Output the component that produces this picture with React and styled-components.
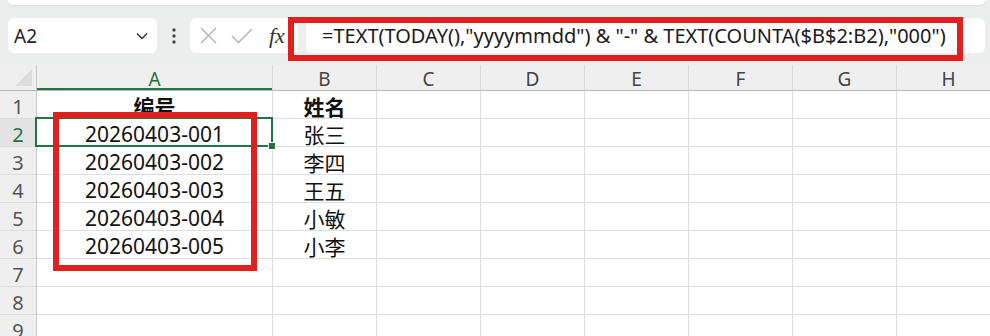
import React from 'react';
import styled, { createGlobalStyle } from 'styled-components';

const GlobalStyle = createGlobalStyle`
  html, body {
    margin: 0;
    padding: 0;
    background: #fff;
    overflow: hidden;
  }
  body {
    font-family: "Noto Sans", "Noto Sans CJK SC", sans-serif;
  }
`;

const GREEN = '#217346';
const RED = '#e0201f';

const Page = styled.div`
  width: 990px;
  height: 336px;
  overflow: hidden;
  background: #fff;
`;

const TopBar = styled.div`
  height: 65px;
  box-sizing: border-box;
  padding: 0 5px 0 8px;
  background: #eceeed;
  display: flex;
  flex-direction: column;
`;

const RibbonEdge = styled.div`
  height: 5px;
  background: #fff;
  border-radius: 0 0 7px 7px;
  box-shadow: 0 1px 2px rgba(0, 0, 0, 0.08);
`;

const FormulaRow = styled.div`
  position: relative;
  display: flex;
  align-items: center;
  height: 35px;
  margin-top: 13px;
`;

const NameBox = styled.div`
  width: 149px;
  height: 100%;
  box-sizing: border-box;
  padding: 0 9px 0 6px;
  background: #fff;
  border-radius: 6px;
  display: flex;
  align-items: center;
  justify-content: space-between;
  font-size: 19px;
  color: #222;
`;

const Dots = styled.div`
  width: 33px;
  display: flex;
  justify-content: center;
`;

const FxBox = styled.div`
  width: 108px;
  height: 100%;
  box-sizing: border-box;
  padding: 0 10px 0 10px;
  background: #fff;
  border-radius: 6px;
  display: flex;
  align-items: center;
  gap: 14px;
`;

const FxLabel = styled.span`
  font-family: "Liberation Serif", serif;
  font-style: italic;
  font-size: 22px;
  color: #333;
  margin-left: 2px;
`;

const FormulaInput = styled.div`
  flex: 1;
  height: 100%;
  margin-left: 8px;
  box-sizing: border-box;
  padding-left: 16px;
  background: #fff;
  border-radius: 6px;
  display: flex;
  align-items: center;
  font-size: 20px;
  color: #1a1a1a;
  white-space: nowrap;
`;

const Highlight = styled.div`
  position: absolute;
  box-sizing: border-box;
  border: 6px solid ${RED};
  left: ${p => p.$left}px;
  top: ${p => p.$top}px;
  width: ${p => p.$width}px;
  height: ${p => p.$height}px;
  pointer-events: none;
  z-index: 5;
`;

const Sheet = styled.div`
  position: relative;
  display: grid;
  grid-template-columns: 37px 236px repeat(7, 104px);
  grid-template-rows: 26px repeat(9, 28px);
`;

const Corner = styled.div`
  position: relative;
  background: #efefef;
  border-right: 1px solid #c8c8c8;
  border-bottom: 1px solid #b5b5b5;
  &::after {
    content: '';
    position: absolute;
    right: 4px;
    bottom: 4px;
    width: 17px;
    height: 17px;
    background: #dcdcdc;
    clip-path: polygon(100% 0, 100% 100%, 0 100%);
  }
`;

const ColHead = styled.div`
  padding-top: 3px;
  background: #efefef;
  border-right: 1px solid #d9d9d9;
  border-bottom: 1px solid #b5b5b5;
  box-shadow: ${p => (p.$active ? `inset 0 -2px 0 ${GREEN}` : 'none')};
  display: flex;
  align-items: center;
  justify-content: center;
  font-size: 19px;
  color: ${p => (p.$active ? GREEN : '#444')};
`;

const RowHead = styled.div`
  padding-top: 3px;
  background: ${p => (p.$active ? '#e3e3e3' : '#efefef')};
  border-right: 1px solid #c8c8c8;
  border-bottom: 1px solid #dcdcdc;
  display: flex;
  align-items: center;
  justify-content: center;
  font-size: 20px;
  color: ${p => (p.$active ? GREEN : '#555')};
`;

const Cell = styled.div`
  position: relative;
  padding-top: 3px;
  border-right: 1px solid #dedede;
  border-bottom: 1px solid #dedede;
  display: flex;
  align-items: center;
  justify-content: center;
  font-size: 21px;
  font-weight: ${p => (p.$bold ? 700 : 400)};
  color: #111;
  white-space: nowrap;
  ${p => p.$selected && `
    &::after {
      content: '';
      position: absolute;
      left: -2px;
      top: -2px;
      right: -1px;
      bottom: -1px;
      border: 2px solid ${GREEN};
      z-index: 2;
    }
    &::before {
      content: '';
      position: absolute;
      right: -4px;
      bottom: -4px;
      width: 6px;
      height: 6px;
      background: ${GREEN};
      border: 1px solid #fff;
      z-index: 3;
    }
  `}
`;

const columns = ['A', 'B', 'C', 'D', 'E', 'F', 'G', 'H'];

const data = [
  ['编号', '姓名'],
  ['20260403-001', '张三'],
  ['20260403-002', '李四'],
  ['20260403-003', '王五'],
  ['20260403-004', '小敏'],
  ['20260403-005', '小李'],
  [],
  [],
  [],
];

function Chevron() {
  return (
    <svg width="12" height="8" viewBox="0 0 12 8">
      <path d="M1 1.5 L6 6.5 L11 1.5" fill="none" stroke="#333" strokeWidth="1.5" />
    </svg>
  );
}

function VDots() {
  return (
    <svg width="4" height="16" viewBox="0 0 4 16">
      <circle cx="2" cy="2" r="1.7" fill="#444" />
      <circle cx="2" cy="8" r="1.7" fill="#444" />
      <circle cx="2" cy="14" r="1.7" fill="#444" />
    </svg>
  );
}

function Cross() {
  return (
    <svg width="17" height="17" viewBox="0 0 17 17">
      <path d="M1 1 L16 16 M16 1 L1 16" stroke="#b0b0b0" strokeWidth="1.4" fill="none" />
    </svg>
  );
}

function Check() {
  return (
    <svg width="22" height="16" viewBox="0 0 22 16">
      <path d="M1 8 L7.5 14.5 L21 1" stroke="#b0b0b0" strokeWidth="1.4" fill="none" />
    </svg>
  );
}

export default function App() {
  return (
    <Page>
      <GlobalStyle />
      <TopBar>
        <RibbonEdge />
        <FormulaRow>
          <NameBox>
            <span>A2</span>
            <Chevron />
          </NameBox>
          <Dots>
            <VDots />
          </Dots>
          <FxBox>
            <Cross />
            <Check />
            <FxLabel>fx</FxLabel>
          </FxBox>
          <FormulaInput>
            =TEXT(TODAY(),"yyyymmdd") &amp; "-" &amp; TEXT(COUNTA($B$2:B2),"000")
          </FormulaInput>
          <Highlight $left={280} $top={-1} $width={675} $height={44} />
        </FormulaRow>
      </TopBar>

      <Sheet>
        <Corner />
        {columns.map(c => (
          <ColHead key={c} $active={c === 'A'}>{c}</ColHead>
        ))}
        {data.map((row, r) => (
          <React.Fragment key={r}>
            <RowHead $active={r === 1}>{r + 1}</RowHead>
            {columns.map((c, ci) => (
              <Cell
                key={c}
                $bold={r === 0}
                $selected={r === 1 && ci === 0}
              >
                {row[ci] || ''}
              </Cell>
            ))}
          </React.Fragment>
        ))}
        <Highlight $left={53} $top={47} $width={204} $height={159} />
      </Sheet>
    </Page>
  );
}
